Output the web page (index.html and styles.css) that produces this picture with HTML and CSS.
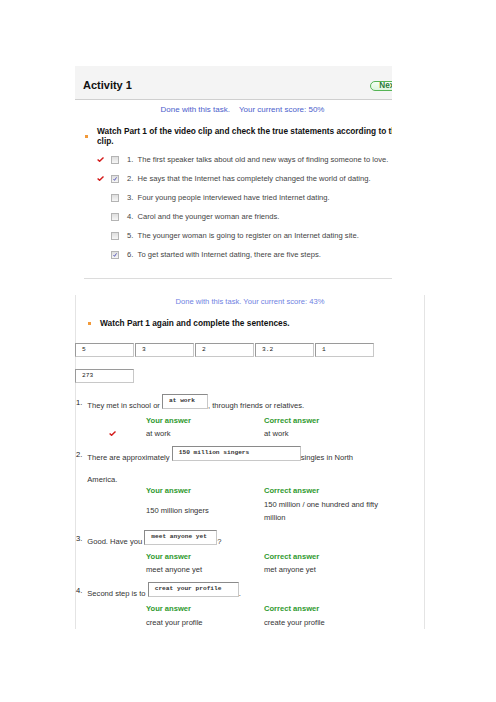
FILE: index.html
```
<!DOCTYPE html>
<html lang="en">
<head>
    <meta charset="UTF-8">
    <title>Activity 1</title>
    <link rel="stylesheet" href="styles.css">
</head>
<body>
  <div class="page">

    <!-- first task: true statements -->
    <section class="activity">
      <header class="act-head">
        <h1 class="act-title">Activity 1</h1>
        <span class="next-btn">Next</span>
      </header>

      <p class="score score-wide">Done with this task.<span class="score-val">Your current score: 50%</span></p>

      <div class="task-title">
        <span class="bullet"></span>
        <h2>Watch Part 1 of the video clip and check the true statements according to the<br>clip.</h2>
      </div>

      <ul class="statements">
        <li>
          <svg class="mark" viewBox="0 0 7 5"><path d="M0.6 2.4 L2.6 4.3 L6.5 0.5"/></svg>
          <span class="cb"></span>
          <span class="num">1.</span>The first speaker talks about old and new ways of finding someone to love.
        </li>
        <li>
          <svg class="mark" viewBox="0 0 7 5"><path d="M0.6 2.4 L2.6 4.3 L6.5 0.5"/></svg>
          <span class="cb checked"><svg viewBox="0 0 8 8"><path d="M2 4 L3.4 5.8 L6 1.8"/></svg></span>
          <span class="num">2.</span>He says that the Internet has completely changed the world of dating.
        </li>
        <li>
          <span class="mark"></span>
          <span class="cb"></span>
          <span class="num">3.</span>Four young people interviewed have tried Internet dating.
        </li>
        <li>
          <span class="mark"></span>
          <span class="cb"></span>
          <span class="num">4.</span>Carol and the younger woman are friends.
        </li>
        <li>
          <span class="mark"></span>
          <span class="cb"></span>
          <span class="num">5.</span>The younger woman is going to register on an Internet dating site.
        </li>
        <li>
          <span class="mark"></span>
          <span class="cb checked"><svg viewBox="0 0 8 8"><path d="M2 4 L3.4 5.8 L6 1.8"/></svg></span>
          <span class="num">6.</span>To get started with Internet dating, there are five steps.
        </li>
      </ul>
      <hr class="sep">
    </section>

    <!-- second task: complete the sentences -->
    <section class="exercise">
      <p class="score score-light">Done with this task. Your current score: 43%</p>

      <div class="task-title task-title-2">
        <span class="bullet"></span>
        <h2>Watch Part 1 again and complete the sentences.</h2>
      </div>

      <div class="keys">
        <span class="key">5</span>
        <span class="key">3</span>
        <span class="key">2</span>
        <span class="key">3.2</span>
        <span class="key">1</span>
      </div>
      <div class="keys keys-2">
        <span class="key">273</span>
      </div>

      <div class="q">
        <span class="q-num">1.</span>
        <div class="q-main">
          <p class="q-body">They met in school or <span class="blank blank-1">at work</span>, through friends or relatives.</p>
          <div class="answers">
            <span></span><span class="ans-label">Your answer</span><span class="ans-label">Correct answer</span>
          </div>
          <div class="answers ans-row">
            <svg class="mark ans-mark" viewBox="0 0 7 5"><path d="M0.6 2.4 L2.6 4.3 L6.5 0.5"/></svg>
            <span>at work</span><span>at work</span>
          </div>
        </div>
      </div>

      <div class="q">
        <span class="q-num">2.</span>
        <div class="q-main">
          <p class="q-body">There are approximately <span class="blank blank-2">150 million singers</span>singles in North America.</p>
          <div class="answers">
            <span></span><span class="ans-label">Your answer</span><span class="ans-label">Correct answer</span>
          </div>
          <div class="answers ans-row">
            <span></span><span>150 million singers</span><span>150 million / one hundred and fifty million</span>
          </div>
        </div>
      </div>

      <div class="q">
        <span class="q-num">3.</span>
        <div class="q-main">
          <p class="q-body">Good. Have you <span class="blank blank-3">meet anyone yet</span>?</p>
          <div class="answers">
            <span></span><span class="ans-label">Your answer</span><span class="ans-label">Correct answer</span>
          </div>
          <div class="answers ans-row">
            <span></span><span>meet anyone yet</span><span>met anyone yet</span>
          </div>
        </div>
      </div>

      <div class="q">
        <span class="q-num">4.</span>
        <div class="q-main">
          <p class="q-body">Second step is to <span class="blank blank-4">creat your profile</span>.</p>
          <div class="answers">
            <span></span><span class="ans-label">Your answer</span><span class="ans-label">Correct answer</span>
          </div>
          <div class="answers ans-row">
            <span></span><span>creat your profile</span><span>create your profile</span>
          </div>
        </div>
      </div>
    </section>

  </div>
</body>
</html>
```

FILE: styles.css
```
body {
    margin: 0;
    background: #fff;
    font-family: "Liberation Sans", Arial, sans-serif;
    font-size: 7.6px;
    color: #333;
}

p, h1, h2, ul {
    margin: 0;
    padding: 0;
}

.page {
    padding: 66px 0 0 75px;
}

/* ---- Activity 1 ---- */
.activity {
    width: 317px;
    overflow: hidden;
}

.act-head {
    height: 34px;
    box-sizing: border-box;
    background: #f4f4f4;
    border-bottom: 1px solid #cfcfcf;
    padding: 13px 0 0 8px;
    display: flex;
    justify-content: space-between;
    align-items: flex-start;
}

.act-title {
    font-size: 11px;
    line-height: 13px;
    font-weight: bold;
    color: #111;
}

/* the button runs past the clipped edge of the panel */
.next-btn {
    flex: none;
    margin: 1.5px -12px 0 0;
    height: 10px;
    box-sizing: border-box;
    padding: 0 6px 0 8px;
    border: 1px solid #55b455;
    border-radius: 6px;
    background: linear-gradient(#f4fff4, #ddf5dd);
    color: #2a7a3a;
    font-size: 8.2px;
    line-height: 8px;
    font-weight: bold;
}

.score {
    margin-top: 5px;
    line-height: 10px;
    text-align: center;
    color: #4a60cc;
}

.score-wide {
    width: 335px;
    font-size: 8px;
}

.score-val {
    margin-left: 9px;
}

.task-title {
    margin-top: 11px;
    padding-left: 10px;
    display: flex;
    align-items: center;
    gap: 9px;
}

.bullet {
    width: 3px;
    height: 3px;
    flex: none;
    background: #f29a3a;
}

.task-title h2 {
    font-size: 8.3px;
    line-height: 10px;
    font-weight: bold;
    color: #111;
    white-space: nowrap;
}

.statements {
    list-style: none;
    margin-top: 4px;
    padding-left: 22px;
}

.statements li {
    height: 19px;
    display: flex;
    align-items: center;
    color: #444;
    white-space: nowrap;
}

.mark {
    width: 7px;
    height: 5px;
    flex: none;
    display: block;
    margin-right: 7px;
}

.mark path {
    fill: none;
    stroke: #d41b1b;
    stroke-width: 1.4;
}

.cb {
    width: 8px;
    height: 8px;
    flex: none;
    box-sizing: border-box;
    border: 1px solid #b4b4b4;
    background: linear-gradient(#dedede, #f6f6f6);
    margin-right: 8px;
}

.cb svg {
    display: block;
    width: 6px;
    height: 6px;
}

.cb path {
    fill: none;
    stroke: #4646b4;
    stroke-width: 1.1;
}

.num {
    width: 10.6px;
    flex: none;
}

.sep {
    margin: 14px 0 0 9px;
    border: 0;
    border-top: 1px solid #dcdcdc;
}

/* ---- complete the sentences ---- */
.exercise {
    margin-top: 16px;
    width: 350px;
    box-sizing: border-box;
    border-left: 1px solid #e4e4e4;
    border-right: 1px solid #e4e4e4;
    padding-top: 2px;
}

.score-light {
    margin-top: 0;
    color: #6f82e2;
}

.task-title-2 {
    margin-top: 11px;
    padding-left: 12px;
}

.keys {
    margin: 15px 0 0 -1px;
    display: flex;
    gap: 1px;
}

.keys-2 {
    margin-top: 12px;
}

.key {
    width: 59px;
    height: 14px;
    box-sizing: border-box;
    border: 1px solid #c8c8c8;
    border-top-color: #9a9a9a;
    border-left-color: #9a9a9a;
    padding: 2px 0 0 6px;
    font-family: "Liberation Mono", "Courier New", monospace;
    font-size: 6.2px;
    line-height: 8px;
    color: #222;
}

.q {
    display: flex;
    margin-top: 6px;
}

.keys-2 + .q {
    margin-top: 11px;
}

.q-num {
    width: 11.3px;
    flex: none;
    line-height: 18px;
    color: #222;
}

.q-body {
    width: 280px;
    line-height: 18px;
    color: #333;
}

/* blank input: the bottom margin makes the line holding it a bit taller */
.blank {
    display: inline-block;
    height: 15px;
    box-sizing: border-box;
    overflow: hidden;
    margin-bottom: 9.5px;
    vertical-align: -11px;
    border: 1px solid #c8c8c8;
    border-top-color: #8a8a8a;
    border-left-color: #8a8a8a;
    padding: 2px 0 0 6px;
    font-family: "Liberation Mono", "Courier New", monospace;
    font-size: 6.2px;
    line-height: 8px;
    font-weight: bold;
    color: #333;
}

.blank-1 { width: 46px; }
.blank-2 { width: 129px; }
.blank-3 { width: 73px; }
.blank-4 { width: 91px; }

.answers {
    margin: -2.6px 0 0 -11.3px;
    display: grid;
    grid-template-columns: 70px 118px 124px;
    align-items: center;
    line-height: 10px;
}

.ans-label {
    color: #2f9a2f;
    font-weight: bold;
}

.ans-row {
    margin-top: 1.5px;
    line-height: 13px;
    color: #333;
}

.ans-mark {
    margin-left: 33px;
}
```
